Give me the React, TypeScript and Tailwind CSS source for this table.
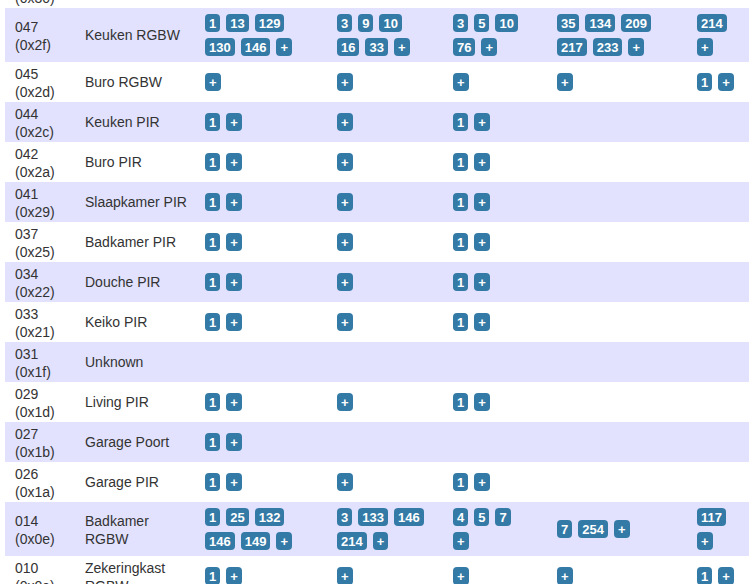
// Node association table — each row is a node, each badge column a group
type Cell = (string | number)[][];

interface NodeRow {
  id: string;
  hex: string;
  name: string[];
  cells: Cell[];
}

const pir: Cell[] = [[[1, "+"]], [["+"]], [[1, "+"]], [], []];

const rows: NodeRow[] = [
  { id: "048", hex: "0x30", name: [], cells: [[], [], [], [], []] },
  {
    id: "047",
    hex: "0x2f",
    name: ["Keuken RGBW"],
    cells: [
      [[1, 13, 129], [130, 146, "+"]],
      [[3, 9, 10], [16, 33, "+"]],
      [[3, 5, 10], [76, "+"]],
      [[35, 134, 209], [217, 233, "+"]],
      [[214], ["+"]],
    ],
  },
  { id: "045", hex: "0x2d", name: ["Buro RGBW"], cells: [[["+"]], [["+"]], [["+"]], [["+"]], [[1, "+"]]] },
  { id: "044", hex: "0x2c", name: ["Keuken PIR"], cells: pir },
  { id: "042", hex: "0x2a", name: ["Buro PIR"], cells: pir },
  { id: "041", hex: "0x29", name: ["Slaapkamer PIR"], cells: pir },
  { id: "037", hex: "0x25", name: ["Badkamer PIR"], cells: pir },
  { id: "034", hex: "0x22", name: ["Douche PIR"], cells: pir },
  { id: "033", hex: "0x21", name: ["Keiko PIR"], cells: pir },
  { id: "031", hex: "0x1f", name: ["Unknown"], cells: [[], [], [], [], []] },
  { id: "029", hex: "0x1d", name: ["Living PIR"], cells: pir },
  { id: "027", hex: "0x1b", name: ["Garage Poort"], cells: [[[1, "+"]], [], [], [], []] },
  { id: "026", hex: "0x1a", name: ["Garage PIR"], cells: pir },
  {
    id: "014",
    hex: "0x0e",
    name: ["Badkamer", "RGBW"],
    cells: [
      [[1, 25, 132], [146, 149, "+"]],
      [[3, 133, 146], [214, "+"]],
      [[4, 5, 7], ["+"]],
      [[7, 254, "+"]],
      [[117], ["+"]],
    ],
  },
  {
    id: "010",
    hex: "0x0a",
    name: ["Zekeringkast", "RGBW"],
    cells: [[[1, "+"]], [["+"]], [["+"]], [["+"]], [[1, "+"]]],
  },
];

// widths of the five badge columns (cell incl. left padding)
const colClass = [
  "w-[132px] pl-[10px]",
  "w-[116px] pl-[10px]",
  "w-[104px] pl-[10px]",
  "w-[140px] pl-[10px]",
  "flex-1 pl-[10px]",
];

function Badge({ value }: { value: string | number }) {
  return (
    <span className="inline-flex h-[18px] min-w-[15px] items-center justify-center rounded-[4px] bg-[#337aa6] px-[4px] text-[13px] font-bold leading-none text-white">
      {value}
    </span>
  );
}

function BadgeCell({ lines, className }: { lines: Cell; className: string }) {
  return (
    <div className={`flex flex-col justify-center gap-[6px] py-[6px] ${className}`}>
      {lines.map((line, i) => (
        <div key={i} className="flex gap-[6px]">
          {line.map((v, j) => (
            <Badge key={j} value={v} />
          ))}
        </div>
      ))}
    </div>
  );
}

export default function App() {
  return (
    <div className="min-h-screen overflow-hidden bg-white pl-[5px] font-['Liberation_Sans',Arial,sans-serif] text-[14px] text-[#333]">
      <div className="-mt-[32px] flex flex-col">
        {rows.map((r, idx) => (
          <div
            key={r.id}
            className={`flex min-h-[40px] items-stretch ${idx % 2 === 1 ? "bg-[#e2e2fe]" : "bg-white"}`}
          >
            <div className="flex w-[70px] flex-col justify-center pl-[10px] pt-[2px] leading-[18px]">
              <span>{r.id}</span>
              <span>({r.hex})</span>
            </div>
            <div
              className={`flex w-[120px] flex-col justify-center whitespace-nowrap pl-[10px] leading-[18px] ${
                r.name.length > 1 ? "pt-[2px]" : ""
              }`}
            >
              {r.name.map((n) => (
                <span key={n}>{n}</span>
              ))}
            </div>
            {r.cells.map((c, i) => (
              <BadgeCell key={i} lines={c} className={colClass[i]} />
            ))}
          </div>
        ))}
      </div>
    </div>
  );
}
